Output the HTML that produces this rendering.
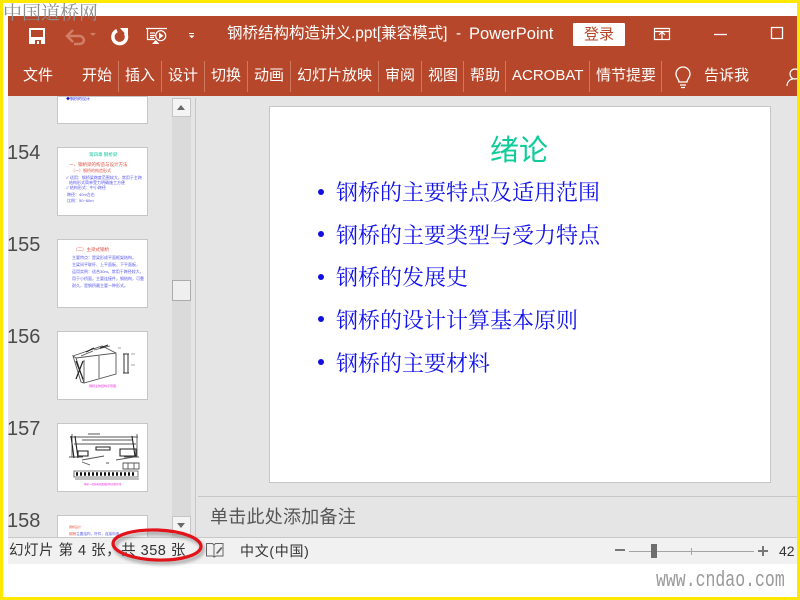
<!DOCTYPE html>
<html><head><meta charset="utf-8"><style>
html,body{margin:0;padding:0}
body{width:800px;height:600px;position:relative;overflow:hidden;background:#fff;font-family:"Liberation Sans","Microsoft YaHei","Noto Sans CJK SC",sans-serif}
.a{position:absolute;white-space:nowrap}
.tab{position:absolute;top:66px;color:#fff;font-size:15px;line-height:20px;white-space:nowrap}
.sep{position:absolute;top:61px;width:1px;height:31px;background:#cf7a60}
.num{position:absolute;left:7px;font-size:20px;line-height:24px;color:#4a4a4a}
.th{position:absolute;left:57px;width:89px;height:67px;background:#fff;border:1px solid #c6c6c6;overflow:hidden}
.th>*{filter:blur(.35px)}
.li{position:absolute;left:336px;font-family:"Noto Serif CJK SC",serif;font-size:22px;line-height:30px;color:#1212ee;white-space:nowrap}
.dot{position:absolute;left:318px;width:6px;height:6px;border-radius:50%;background:#1010e0}
.t{position:absolute;font-size:4px;line-height:5px;white-space:nowrap;color:#5555ee}
.r{color:#e05040}
</style></head><body>

<!-- yellow frame -->
<div class="a" style="left:0;top:0;width:800px;height:3px;background:#ffe800"></div>
<div class="a" style="left:0;top:597px;width:800px;height:3px;background:#ffe800"></div>
<div class="a" style="left:0;top:0;width:3px;height:600px;background:#ffe800"></div>
<div class="a" style="left:797px;top:0;width:3px;height:600px;background:#ffe800"></div>

<!-- ribbon -->
<div class="a" style="left:8px;top:16px;width:789px;height:80px;background:#b7472a"></div>

<!-- quick access icons -->
<svg class="a" style="left:8px;top:16px" width="200" height="40" viewBox="0 0 200 40">
<path d="M21 12h16v16H21z M23 14v7h12v-7z M27 24v4h2v-3h2v3h2v-4z" fill="#fff" fill-rule="evenodd"/>
<path d="M65 14l-6 6 6 6M60 20h11c6 0 7 8 0 8h-5" fill="none" stroke="#d07f68" stroke-width="2.500"/>
<path d="M82 17h6l-3 3z" fill="#d07f68"/>
<path d="M109 14.600A6.800 6.800 0 1 0 117.300 17" fill="none" stroke="#fff" stroke-width="3.500"/>
<path d="M112 12h8v9z" fill="#fff"/>
<path d="M138 12.500h21M139.500 12.500v11H147M142 17h5M142 19.500h5M142 21.500h4" fill="none" stroke="#fff" stroke-width="1.200"/>
<circle cx="152.700" cy="19.700" r="5" fill="none" stroke="#fff" stroke-width="1.200"/>
<path d="M151 16.500v6.500l4.500-3.300z" fill="#fff"/>
<path d="M144 28l3.700-4 3.700 4z" fill="#fff"/>
<path d="M181 17h5v1h-5z M181 19.500h5.500l-2.750 2.750z" fill="#fff"/>
</svg>

<div class="a" style="left:227px;top:24px;color:#fff;font-size:15.500px;line-height:20px">钢桥结构构造讲义.ppt[兼容模式]</div>
<div class="a" style="left:456px;top:24px;color:#fff;font-size:15.500px;line-height:20px">-</div>
<div class="a" style="left:469px;top:24px;color:#fff;font-size:16.500px;line-height:20px">PowerPoint</div>

<div class="a" style="left:573px;top:23px;width:52px;height:23px;background:#fff;border-radius:1px;color:#b7472a;font-size:15px;line-height:24px;text-align:center">登录</div>

<svg class="a" style="left:650px;top:24px" width="140" height="20" viewBox="0 0 140 20">
<path d="M4.500 4.500h15v11h-15zM4 7.500h16M12 15v-6M9 11l3-3 3 3" fill="none" stroke="#fff" stroke-width="1.200"/>
<path d="M64 10.500h13" stroke="#fff" stroke-width="1.300"/>
<path d="M121.500 3.500h11v11h-11z" fill="none" stroke="#fff" stroke-width="1.300"/>
</svg>

<!-- tabs -->
<div class="tab" style="left:23px">文件</div>
<div class="tab" style="left:82px">开始</div>
<div class="sep" style="left:118px"></div>
<div class="tab" style="left:125px">插入</div>
<div class="sep" style="left:161px"></div>
<div class="tab" style="left:168px">设计</div>
<div class="sep" style="left:204px"></div>
<div class="tab" style="left:211px">切换</div>
<div class="sep" style="left:247px"></div>
<div class="tab" style="left:254px">动画</div>
<div class="sep" style="left:290px"></div>
<div class="tab" style="left:297px">幻灯片放映</div>
<div class="sep" style="left:378px"></div>
<div class="tab" style="left:385px">审阅</div>
<div class="sep" style="left:421px"></div>
<div class="tab" style="left:428px">视图</div>
<div class="sep" style="left:463px"></div>
<div class="tab" style="left:470px">帮助</div>
<div class="sep" style="left:505px"></div>
<div class="tab" style="left:512px">ACROBAT</div>
<div class="sep" style="left:589px"></div>
<div class="tab" style="left:596px">情节提要</div>
<div class="sep" style="left:661px"></div>
<div class="tab" style="left:704px">告诉我</div>
<svg class="a" style="left:672px;top:64px" width="22" height="26" viewBox="0 0 22 26">
<path d="M7 18c0-3-3-4-3-8a7 7 0 0 1 14 0c0 4-3 5-3 8z M8 21h6M9 23.500h4" fill="none" stroke="#fff" stroke-width="1.300"/>
</svg>
<svg class="a" style="left:786px;top:68px" width="11" height="22" viewBox="0 0 11 22">
<circle cx="9" cy="6" r="5" fill="none" stroke="#fff" stroke-width="1.200"/>
<path d="M1 18c0-4 3-7 6-7" fill="none" stroke="#fff" stroke-width="1.200"/>
</svg>

<!-- main bg -->
<div class="a" style="left:8px;top:96px;width:789px;height:441px;background:#e5e5e5"></div>

<!-- scrollbar -->
<div class="a" style="left:172px;top:98px;width:19px;height:439px;background:#dadada"></div>
<div class="a" style="left:172px;top:98px;width:17px;height:17px;background:#f4f4f4;border:1px solid #c6c6c6"></div>
<div class="a" style="left:177px;top:105px;width:0;height:0;border-left:4.500px solid transparent;border-right:4.500px solid transparent;border-bottom:5px solid #6a6a6a"></div>
<div class="a" style="left:172px;top:280px;width:17px;height:19px;background:#efefef;border:1px solid #ababab"></div>
<div class="a" style="left:172px;top:516px;width:17px;height:17px;background:#f4f4f4;border:1px solid #c6c6c6"></div>
<div class="a" style="left:177px;top:523px;width:0;height:0;border-left:4.500px solid transparent;border-right:4.500px solid transparent;border-top:5px solid #6a6a6a"></div>
<div class="a" style="left:195px;top:98px;width:1px;height:439px;background:#c6c6c6"></div>

<!-- thumbnails -->
<div class="th" style="top:96px;height:26px"><div class="t" style="left:8px;top:-1px;color:#2222ee">◆钢桥的设计</div></div>

<div class="num" style="top:141px">154</div>
<div class="th" style="top:147px">
<div class="t" style="left:31px;top:4px;color:#10c8a0;font-size:4.500px">第四章 钢桥梁</div>
<div class="t r" style="left:11px;top:14px;font-size:4.500px">一、钢桥梁的构造与设计方法</div>
<div class="t r" style="left:13px;top:20px">（一）钢桥的构造形式</div>
<div class="t" style="left:8px;top:27px">✓ 适用：钢桥梁跨度范围较大，常用于主跨</div>
<div class="t" style="left:11px;top:32px">结构形式简单受力明确施工方便</div>
<div class="t" style="left:8px;top:37px">✓ 结构形式：中小跨径</div>
<div class="t" style="left:9px;top:44px">跨径：40m左右</div>
<div class="t" style="left:9px;top:50px">比例：50~80m</div>
</div>

<div class="num" style="top:233px">155</div>
<div class="th" style="top:239px">
<div class="t r" style="left:15px;top:7px;font-size:4.500px">（二）主梁式钢桥</div>
<div class="t" style="left:14px;top:15px">主要特点：是梁形成平面框架结构，</div>
<div class="t" style="left:14px;top:22px">主梁间平联杆、上平面板、下平面板，</div>
<div class="t" style="left:14px;top:29px">运用实例：适合30m，常用于跨径较大，</div>
<div class="t" style="left:14px;top:36px">用于小桥面，主要连接件，钢结构，可靠</div>
<div class="t" style="left:14px;top:43px">耐久，是钢桥最主要一种形式。</div>
</div>

<div class="num" style="top:325px">156</div>
<div class="th" style="top:331px">
<svg width="89" height="67" viewBox="0 0 89 67" style="position:absolute;left:0;top:0">
<path d="M18 26L58 21V42L26 51ZM15 24L18 26L26 51L23 50ZM15 24L44 14L58 21M41 24V46M26 51V28M23 24L35 19M36 18L52 14" fill="none" stroke="#555" stroke-width=".9"/>
<path d="M18 29l7 18M25 29l-7 18M28 20l8-4M42 16l8-3" stroke="#222" stroke-width="1.200"/>
<path d="M66 22v19M70 22v19M65 22h6M65 41h6" fill="none" stroke="#333" stroke-width="1"/>
<path d="M60 16l3 0M73 22h4M73 33h4" stroke="#888" stroke-width=".8"/>
</svg>
<div class="t" style="left:31px;top:52px;color:#f030e0;font-size:3px">钢桥主体结构示意图</div>
</div>

<div class="num" style="top:417px">157</div>
<div class="th" style="top:423px">
<svg width="89" height="67" viewBox="0 0 89 67" style="position:absolute;left:0;top:0">
<path d="M12 13h68M14 10v23M79 10v23M16 20h62M24 16h50M30 10h12M24 36l22-4M58 36l18-3M11 33h14M66 33h15M24 38l8 3M65 39h16v6H65zM70 39v6M76 39v6M48 39h3" fill="none" stroke="#555" stroke-width=".9"/>
<path d="M13 12l3 22M17 12l3 22M74 12l3 20M20 27h10v5H20zM62 25h16v7H62zM38 23h14v3H38z" stroke="#222" stroke-width="1.100" fill="none"/>
<path d="M16 47h64v6H16zM17 55h64" fill="none" stroke="#555" stroke-width=".8"/>
<path d="M18 50h60" stroke="#111" stroke-width="3.500" stroke-dasharray="2 2"/>
</svg>
<div class="t" style="left:26px;top:58px;color:#f030e0;font-size:2.500px">钢桥一般结构图及细部构造图示意</div>
</div>

<div class="num" style="top:509px">158</div>
<div class="th" style="top:515px;height:22px;border-bottom:none">
<div class="t r" style="left:11px;top:9px;font-size:3px">钢桥设计</div>
<div class="t" style="left:11px;top:16px;font-size:3.600px"><span class="r">钢桥</span>主要结构，杆件，连接构造</div>
</div>

<!-- slide -->
<div class="a" style="left:269px;top:106px;width:500px;height:375px;background:#fff;border:1px solid #c6c6c6"></div>
<div class="a" style="left:490px;top:130px;font-size:29px;line-height:36px;color:#10cc99;font-family:'Noto Sans CJK SC',sans-serif">绪论</div>
<div class="dot" style="top:189px"></div><div class="li" style="top:177px">钢桥的主要特点及适用范围</div>
<div class="dot" style="top:231px"></div><div class="li" style="top:220px">钢桥的主要类型与受力特点</div>
<div class="dot" style="top:274px"></div><div class="li" style="top:262px">钢桥的发展史</div>
<div class="dot" style="top:316px"></div><div class="li" style="top:305px">钢桥的设计计算基本原则</div>
<div class="dot" style="top:359px"></div><div class="li" style="top:348px">钢桥的主要材料</div>

<!-- notes -->
<div class="a" style="left:198px;top:496px;width:599px;height:1px;background:#c6c6c6"></div>
<div class="a" style="left:210px;top:505px;font-size:18px;line-height:24px;letter-spacing:.25px;color:#555">单击此处添加备注</div>

<!-- status bar -->
<div class="a" style="left:8px;top:537px;width:789px;height:27px;background:#f1f1f1;border-top:1px solid #c8c8c8;box-sizing:border-box"></div>
<div class="a" style="left:9px;top:541px;font-size:14.500px;line-height:20px;letter-spacing:.5px;color:#333">幻灯片 第 4 张，共 358 张</div>
<svg class="a" style="left:205px;top:541px" width="20" height="18" viewBox="0 0 20 18">
<path d="M1.500 2.500h6l1.500 1.500v12l-1.500-1h-6zM9 4l1.500-1.500H18V15h-7l-2 1" fill="none" stroke="#666" stroke-width="1"/>
<path d="M11 12l5-6 1.500 1-5 6z" fill="#666"/>
</svg>
<div class="a" style="left:240px;top:541px;font-size:14px;line-height:20px;letter-spacing:.7px;color:#333">中文(中国)</div>

<!-- zoom -->
<div class="a" style="left:615px;top:549px;width:10px;height:2px;background:#777"></div>
<div class="a" style="left:629px;top:551px;width:125px;height:1px;background:#a4a4a4"></div>
<div class="a" style="left:691px;top:548px;width:1px;height:7px;background:#a4a4a4"></div>
<div class="a" style="left:651px;top:544px;width:6px;height:14px;background:#6e6e6e"></div>
<div class="a" style="left:758px;top:550px;width:10px;height:2px;background:#777"></div>
<div class="a" style="left:762px;top:546px;width:2px;height:10px;background:#777"></div>
<div class="a" style="left:779px;top:541px;width:16px;overflow:hidden;font-size:14px;line-height:20px;color:#333">42%</div>

<!-- red ellipse -->
<svg class="a" style="left:105px;top:522px" width="105" height="52" viewBox="0 0 105 52">
<defs><filter id="s" x="-20%" y="-40%" width="140%" height="180%"><feGaussianBlur stdDeviation="1.800"/></filter></defs>
<g transform="rotate(2 52 23)">
<ellipse cx="54" cy="26" rx="44" ry="15" fill="none" stroke="#555" stroke-width="3" opacity=".55" filter="url(#s)"/>
<ellipse cx="52" cy="23" rx="44" ry="15" fill="none" stroke="#e0141a" stroke-width="3.200"/>
</g>
</svg>

<!-- watermarks -->
<div class="a" style="left:3px;top:0;font-family:'Noto Serif CJK SC',serif;font-size:19px;line-height:24px;color:#8e8e8e">中国道桥网</div>
<div class="a" style="left:656px;top:568px;font-family:'Liberation Mono',monospace;font-size:22px;line-height:26px;color:#999;transform:scaleX(.75);transform-origin:left top">www.cndao.com</div>

</body></html>
